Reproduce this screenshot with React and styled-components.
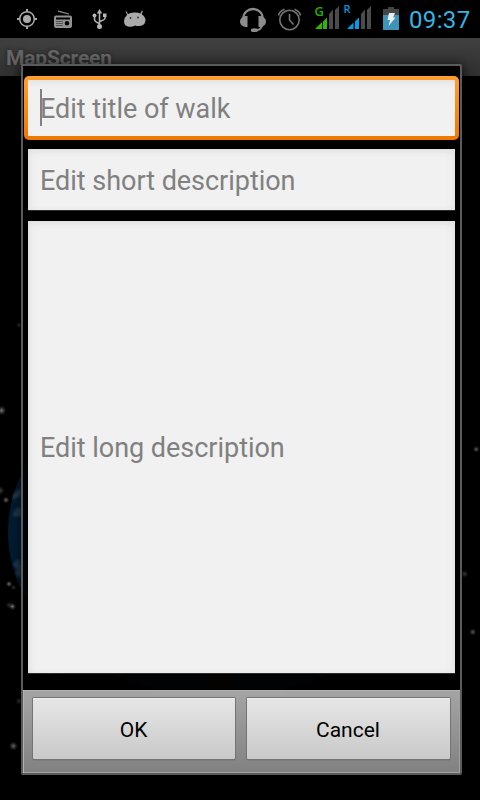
import React from "react";
import styled, { createGlobalStyle, css } from "styled-components";

const GlobalStyle = createGlobalStyle`
  * { box-sizing: border-box; }
  body { margin: 0; background: #000; font-family: Roboto, sans-serif; }
`;

const Screen = styled.main`
  position: relative;
  width: 480px;
  height: 800px;
  overflow: hidden;
  background: #000;
  display: flex;
  flex-direction: column;
`;

const StatusBar = styled.header`
  height: 38px;
  flex: none;
  display: flex;
  justify-content: space-between;
  background: #000;
`;

const StatusIcon = styled.svg`
  display: block;
  flex: none;
  width: ${(p) => p.$width}px;
  height: 38px;
`;

const StatusGroup = styled.div`
  display: flex;
`;

const Clock = styled.time`
  width: 72px;
  height: 38px;
  padding-left: 1px;
  font-size: 24px;
  line-height: 40px;
  letter-spacing: 0.35px;
  color: #33b5e5;
  white-space: nowrap;
`;

const TitleBar = styled.h1`
  height: 38px;
  flex: none;
  margin: 0;
  padding-left: 6px;
  background: linear-gradient(#404040, #303030);
  color: #666;
  text-shadow: 0 0 4px #222;
  font-size: 21px;
  font-weight: 700;
  line-height: 40px;
  letter-spacing: -0.15px;
`;

const Sky = styled.svg`
  display: block;
  width: 480px;
  height: 724px;
`;

const Dialog = styled.section`
  position: absolute;
  left: 21px;
  top: 64px;
  width: 441px;
  height: 711px;
  display: flex;
  flex-direction: column;
  border: 2px solid #5b5b5b;
  border-radius: 2px;
  background: rgba(0, 0, 0, 0.93);
  box-shadow: 0 2px 12px 2px rgba(0, 0, 0, 0.65);
`;

const Fields = styled.div`
  flex: 1;
  display: flex;
  flex-direction: column;
  gap: 11px;
  padding: 10px 5px 17px;
`;

const Field = styled.div`
  height: ${(p) => p.$height}px;
  flex: none;
  display: flex;
  align-items: center;
  padding-left: 12px;
  background: #f1f1f1;
  box-shadow: inset 0 5px 7px -3px #dfdfdf, inset 5px 0 8px -4px #dfdfdf,
    inset -5px 0 8px -4px #dfdfdf, 0 1px 0 #2c2c2c;
  ${(p) =>
    p.$focused &&
    css`
      height: 64px;
      margin: 0 -4px -2px;
      border: 4px solid transparent;
      border-radius: 5px;
      background: linear-gradient(#f1f1f1, #f1f1f1) padding-box,
        linear-gradient(#ff9f2f, #ef7700) border-box;
      box-shadow: inset 0 5px 7px -3px #dfdfdf;
    `}
`;

const Caret = styled.span`
  width: 2px;
  height: 37px;
  margin-right: -2px;
  margin-top: -1px;
  background: #808080;
`;

const Hint = styled.span`
  padding-top: 2px;
  color: #808080;
  font-size: 27px;
  line-height: 36px;
  letter-spacing: -0.03px;
  white-space: nowrap;
`;

const Actions = styled.footer`
  height: 83px;
  flex: none;
  display: flex;
  gap: 12px;
  padding: 8px 10px 14px;
  background: linear-gradient(#a5a5a5, #818181);
  box-shadow: inset 1px 1px 0 #b2b2b2, inset -1px -1px 0 #a0a0a0;
`;

const Button = styled.button`
  width: ${(p) => p.$width}px;
  height: 61px;
  padding: 2px 1px 0 0;
  border: 0;
  border-radius: 1px;
  background: linear-gradient(#e6e6e6, #c9c9c9);
  box-shadow: inset 0 1px 0 #efefef, 0 0 0 1px #747474, 0 1px 1px 0 #3b3b3b;
  color: #000;
  font-family: Roboto, sans-serif;
  font-size: 21px;
`;

const stars = [
  [1.5, 410.5, 2.5, 0.55],
  [0, 490.5, 2.5, 0.3],
  [6, 500, 1.8, 0.5],
  [9, 584, 1.7, 0.55],
  [13.5, 587.5, 1.6, 0.25],
  [9, 605, 2, 0.2],
  [12.5, 606.5, 1.9, 0.6],
  [13.5, 746, 2.3, 0.55],
  [19, 701, 2, 0.3],
  [19, 325, 1.5, 0.3],
  [476.2, 449.2, 1.8, 0.45],
  [464.5, 574, 2, 0.4],
  [472.7, 632, 1.9, 0.45],
  [56, 679, 2.2, 0.4],
];

function LeftIcons() {
  return (
    <StatusIcon $width={160} viewBox="0 0 160 38" fill="none">
      <g stroke="#aaa">
        <circle cx="27" cy="19" r="7.3" strokeWidth="1.5" />
        <path d="M27 9v3M27 26v3M17 19h3M34 19h3" strokeWidth="2" />
        <circle cx="27" cy="19" r="4" fill="#aaa" stroke="none" />
      </g>
      <path d="M58 11.200 69 14" stroke="#929292" strokeWidth="1.2" />
      <path
        fillRule="evenodd"
        fill="#929292"
        d="M56 15.500h14q2 0 2 2V26q0 2-2 2H56q-2 0-2-2v-8.500q0-2 2-2ZM56 17.500v2h14v-2ZM67 21a2.300 2.300 0 1 0 0 4.600a2.300 2.300 0 0 0 0-4.600Z"
      />
      <path d="M56 21.500h7M56 23.500h7M56 25.500h7" stroke="#444" strokeWidth=".8" />
      <g stroke="#b5b5b5" strokeWidth="1.5">
        <path d="M99.500 12v14M94.500 16v3q0 3 5 4.500M105 15v3q0 2-5.500 3.500" />
        <path d="m96.800 13.500 2.700-4.500 2.700 4.500Z" fill="#b5b5b5" stroke="none" />
        <circle cx="99.500" cy="26.600" r="2.500" fill="#b5b5b5" stroke="none" />
        <circle cx="94.500" cy="15.500" r="2" fill="#b5b5b5" stroke="none" />
        <path d="M103 13.500h3.500V17H103Z" fill="#b5b5b5" stroke="none" />
      </g>
      <path
        fill="#aaa"
        d="M126.500 11.200 128 14q3-1.800 6.500-1.500 3-.3 6 1l1.400-3 1 .5-1.300 3.300q3.800 2.500 3.900 5.700 0 4.500-4.500 5.700-3 .8-5.800-.2-3 1.700-6.500 1.200-4.800-.7-4.700-5.400.1-3.800 3.200-6.600l-1.600-3Z"
      />
      <circle cx="130.500" cy="18" r=".9" fill="#333" />
      <circle cx="138" cy="17.500" r=".9" fill="#333" />
    </StatusIcon>
  );
}

function RightIcons() {
  return (
    <StatusIcon $width={172} viewBox="236 0 172 38" fill="none">
      <path
        d="M243.500 19v-1.500a9.500 8.500 0 0 1 19 0V19"
        stroke="#8c8c8c"
        strokeWidth="2.300"
      />
      <path
        d="M247.500 16v11H245q-5-1.500-5-5.500t5-5.500ZM258.500 16v11h2.500q5-1.500 5-5.500t-5-5.500Z"
        fill="#8c8c8c"
      />
      <path d="M262 26q-1 3.500-5 4" stroke="#8c8c8c" strokeWidth="1.800" />
      <ellipse cx="254.500" cy="30.200" rx="3.700" ry="1.900" fill="#8c8c8c" />
      <g stroke="#757575" strokeWidth="1.600">
        <circle cx="289.500" cy="20" r="9.700" />
        <path d="M289.500 14v6l4 4.500M278.500 15.500q1-4.500 6-6.300M300.500 15.500q-1-4.500-6-6.300" />
      </g>
      <text
        x="314.500"
        y="16"
        fill="#28b000"
        fontFamily="Open Sans, sans-serif"
        fontSize="13"
        fontWeight="600"
      >
        G
      </text>
      <path d="M315 29h7v-7Z M323 21.500l4-4V29h-4Z" fill="#30b800" />
      <path d="M329 14l4-4.500V29h-4Z M335 10l4-4V29h-4Z" fill="#4b4b4b" />
      <text
        x="343.500"
        y="13"
        fill="#0095db"
        fontFamily="Open Sans, sans-serif"
        fontSize="11"
        fontWeight="600"
      >
        R
      </text>
      <path d="M347 29h6.500v-6.500Z M355 21.500l4-4V29h-4Z" fill="#009ee8" />
      <path d="M361 14l4-4.500V29h-4Z M367 10l4-4V29h-4Z" fill="#4b4b4b" />
      <path d="M383 9h5V7h6v2h5v6h-16Z" fill="#454545" />
      <path d="M383 15h16v15h-16Z" fill="#3c94b8" />
      <path d="M389 13h6l-2 4.500h2.500L388.500 26l1.500-6h-2.500Z" fill="#eee" />
    </StatusIcon>
  );
}

function Backdrop() {
  return (
    <Sky viewBox="0 76 480 724">
      <defs>
        <radialGradient id="glow">
          <stop offset="0" stopColor="#ddd" />
          <stop offset=".35" stopColor="#aaa" stopOpacity=".7" />
          <stop offset="1" stopColor="#888" stopOpacity="0" />
        </radialGradient>
        <radialGradient id="ocean">
          <stop offset=".85" stopColor="#002c50" />
          <stop offset="1" stopColor="#001b31" />
        </radialGradient>
        <filter id="soft">
          <feGaussianBlur stdDeviation=".9" />
        </filter>
      </defs>
      <ellipse cx="220" cy="532" rx="212" ry="165" fill="url(#ocean)" />
      <g fill="#33485a" opacity=".7" filter="url(#soft)">
        <path d="M12 497q4-8 9-8v7l-8 4ZM13 513l5-6 4 2v7l-8 1Z" />
        <path d="m14 562 5-3 2 7v12l-5-3 1-7-4-2Z" />
      </g>
      <path d="M200 670h34v18h-25Z" fill="#402800" filter="url(#soft)" />
      {stars.map(([x, y, r, o]) => (
        <circle key={`${x}-${y}`} cx={x} cy={y} r={r * 1.9} fill="url(#glow)" opacity={o} />
      ))}
    </Sky>
  );
}

export default function App() {
  return (
    <>
      <GlobalStyle />
      <Screen>
        <StatusBar>
          <LeftIcons />
          <StatusGroup>
            <RightIcons />
            <Clock>09:37</Clock>
          </StatusGroup>
        </StatusBar>
        <TitleBar>MapScreen</TitleBar>
        <Backdrop />
        <Dialog>
          <Fields>
            <Field $focused>
              <Caret />
              <Hint>Edit title of walk</Hint>
            </Field>
            <Field $height={61}>
              <Hint>Edit short description</Hint>
            </Field>
            <Field $height={452}>
              <Hint>Edit long description</Hint>
            </Field>
          </Fields>
          <Actions>
            <Button $width={202}>OK</Button>
            <Button $width={203}>Cancel</Button>
          </Actions>
        </Dialog>
      </Screen>
    </>
  );
}
